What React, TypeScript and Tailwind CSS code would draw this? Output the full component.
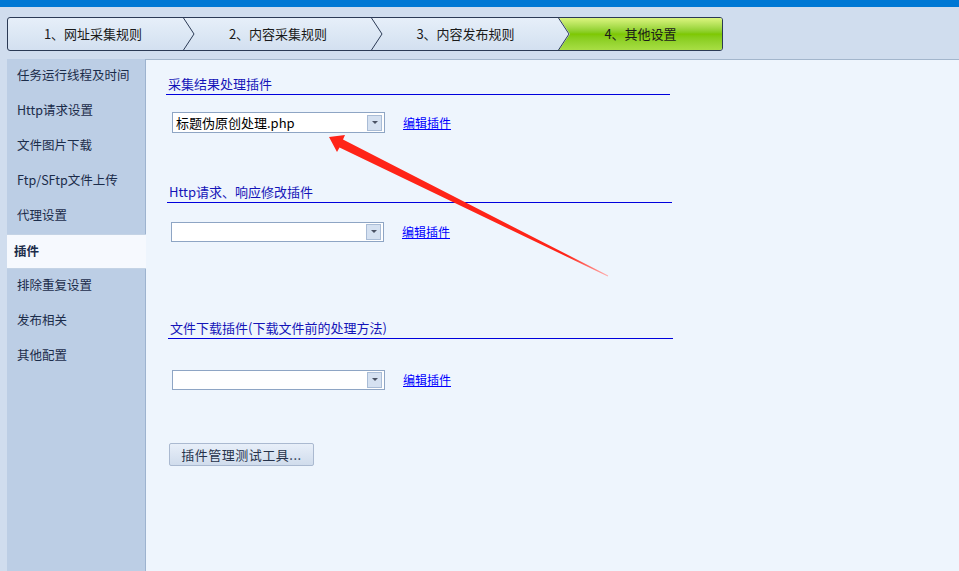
import React from "react"

const tabs = ["1、网址采集规则", "2、内容采集规则", "3、内容发布规则"]

const menu = [
  "任务运行线程及时间",
  "Http请求设置",
  "文件图片下载",
  "Ftp/SFtp文件上传",
  "代理设置",
  "插件",
  "排除重复设置",
  "发布相关",
  "其他配置",
]

function Chevron() {
  return (
    <svg className="absolute right-[-11px] top-0 z-10" width="12" height="32" viewBox="0 0 12 32">
      <polyline points="0.5,0 11,16 0.5,32" fill="none" stroke="#2b3a55" strokeWidth="1" />
    </svg>
  )
}

function Combo({ value, h }: { value?: string; h: string }) {
  return (
    <div className={`flex w-[213px] items-center justify-between border border-[#8ea5c4] bg-white ${h}`}>
      <span className="pl-[3px] text-[13px] leading-none text-black">{value}</span>
      <div className="mr-[2px] flex h-[16px] w-[15px] items-center justify-center border border-[#a9bcd6] bg-[#d5e1f1]">
        <svg width="6" height="4" viewBox="0 0 6 4">
          <polygon points="0,0 6,0 3,3" fill="#4a5264" />
        </svg>
      </div>
    </div>
  )
}

function EditLink() {
  return <span className="ml-[18px] text-[12px] leading-none text-[#0000ff] underline">编辑插件</span>
}

export default function App() {
  return (
    <div className="relative h-[571px] w-[959px] overflow-hidden bg-[#d0ddee] font-['Noto_Sans_CJK_SC',sans-serif]">
      <div className="h-[7px] bg-[#0078d4]" />

      {/* step tabs */}
      <div className="h-[52px] px-[7px] pt-[10px]">
        <div className="flex h-[34px] w-[716px] overflow-hidden rounded-[3px] border border-[#2b3a55] bg-gradient-to-b from-[#e6eff9] to-[#d3e0f0]">
          {tabs.map((t, i) => (
            <div
              key={t}
              className={`relative flex h-full items-center justify-center text-[13px] text-[#1a1a1a] ${
                i === 0 ? "w-[176px] pr-[6px]" : i === 1 ? "w-[188px]" : "w-[187px]"
              }`}
            >
              {t}
              <Chevron />
            </div>
          ))}
          <div className="flex h-full flex-1 items-center justify-center bg-gradient-to-b from-[#dcf57e] via-[#7ec800] to-[#a8de44] text-[13px] text-[#1a1a1a] [clip-path:polygon(0_0,100%_0,100%_100%,0_100%,11px_50%)]">
            4、其他设置
          </div>
        </div>
      </div>

      <div className="flex h-[512px]">
        {/* side menu */}
        <aside className="ml-[7px] w-[139px] border-r border-[#9db3cf] bg-[#bccee5]">
          {menu.map((m) =>
            m === "插件" ? (
              <div
                key={m}
                className="relative z-10 mr-[-1px] flex h-[35px] items-center border-y border-[#c4d3e5] bg-[#f6f9fe] pb-[1px] pl-[7px] text-[12.5px] font-bold text-[#1b2c4a]"
              >
                {m}
              </div>
            ) : (
              <div key={m} className="flex h-[35px] items-center pb-[3px] pl-[10px] text-[12.5px] text-[#1b2c4a]">
                {m}
              </div>
            )
          )}
        </aside>

        {/* plugin settings */}
        <main className="flex-1 border-t border-[#a3b6cc] bg-[#eef5fd]">
          <div className="ml-[20px] mt-[16px] w-[504px] border-b border-[#0000dd] pb-[2px] pl-[2px] text-[13px] leading-[16px] text-[#1414b8]">
            采集结果处理插件
          </div>
          <div className="ml-[26px] mt-[17px] flex items-center">
            <Combo value="标题伪原创处理.php" h="h-[21px]" />
            <EditLink />
          </div>

          <div className="ml-[21px] mt-[51px] w-[505px] border-b border-[#0000dd] pb-[2px] pl-[2px] text-[13px] leading-[16px] text-[#1414b8]">
            Http请求、响应修改插件
          </div>
          <div className="ml-[25px] mt-[19px] flex items-center">
            <Combo h="h-[20px]" />
            <EditLink />
          </div>

          <div className="ml-[22px] mt-[78px] w-[505px] border-b border-[#0000dd] pb-[2px] pl-[2px] text-[13px] leading-[16px] text-[#1414b8]">
            文件下载插件(下载文件前的处理方法)
          </div>
          <div className="ml-[26px] mt-[31px] flex items-center">
            <Combo h="h-[20px]" />
            <EditLink />
          </div>

          <button className="ml-[23px] mt-[53px] flex h-[23px] w-[145px] items-center justify-center rounded-[2px] border border-[#aab9d0] bg-gradient-to-b from-[#e8eff9] to-[#d0dcec] text-[13px] tracking-[0.5px] text-[#26324a]">
            插件管理测试工具...
          </button>
        </main>
      </div>

      {/* red annotation arrow */}
      <svg className="pointer-events-none absolute left-0 top-0" width="959" height="571" viewBox="0 0 959 571">
        <defs>
          <linearGradient id="arr" x1="330" y1="138" x2="608" y2="276" gradientUnits="userSpaceOnUse">
            <stop offset="0" stopColor="#ff2418" />
            <stop offset="0.85" stopColor="#ff2418" />
            <stop offset="1" stopColor="#ffb0b0" />
          </linearGradient>
        </defs>
        <polygon
          points="329,137 345,135 343,139.5 608.2,275.6 607.8,276.4 339.5,147.5 337,152"
          fill="url(#arr)"
        />
      </svg>
    </div>
  )
}
